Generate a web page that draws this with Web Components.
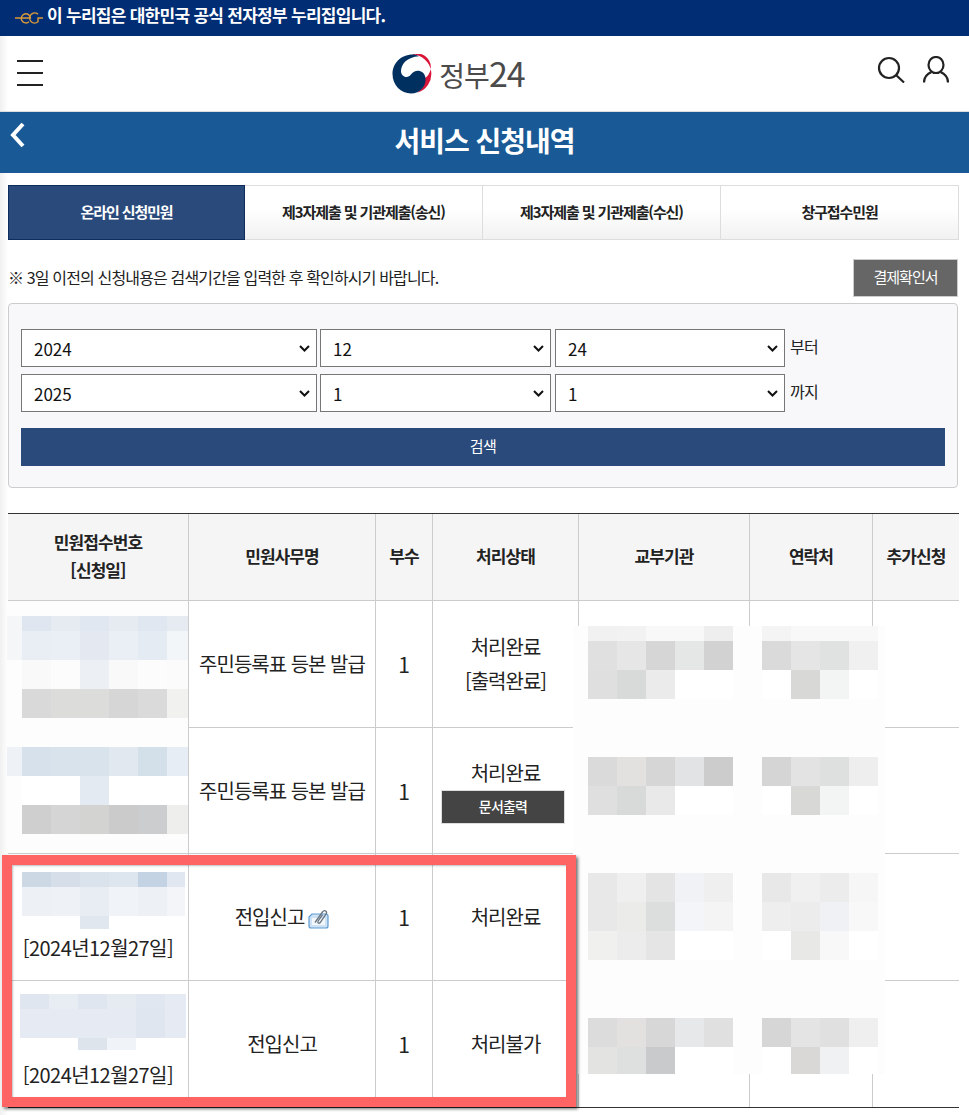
<!DOCTYPE html>
<html lang="ko">
<head>
<meta charset="utf-8">
<title>서비스 신청내역</title>
<style>
  html, body { margin: 0; padding: 0; }
  body {
    width: 969px;
    min-height: 1115px;
    overflow-x: hidden;
    background: linear-gradient(to right, #f0f0f0 0, #fbfbfb 6px, #fff 8px);
    font-family: "Noto Sans CJK KR", "Noto Sans", sans-serif;
    color: #222;
  }
</style>
</head>
<body>
  <gov-banner>이 누리집은 대한민국 공식 전자정부 누리집입니다.</gov-banner>
  <site-header></site-header>
  <title-bar>서비스 신청내역</title-bar>
  <page-body>
    <tab-bar>
      <tab-item active>온라인 신청민원</tab-item>
      <tab-item>제3자제출 및 기관제출(송신)</tab-item>
      <tab-item>제3자제출 및 기관제출(수신)</tab-item>
      <tab-item>창구접수민원</tab-item>
    </tab-bar>
    <notice-row button="결제확인서">※ 3일 이전의 신청내용은 검색기간을 입력한 후 확인하시기 바랍니다.</notice-row>
    <search-form></search-form>
    <result-table></result-table>
  </page-body>

<script>
class GovBanner extends HTMLElement {
  constructor() {
    super();
    this.attachShadow({ mode: "open" });
    this.shadowRoot.innerHTML = `
      <style>
        :host {
          display: flex;
          align-items: center;
          gap: 4px;
          height: 36px;
          padding-left: 15px;
          background: #002d73;
          color: #fff;
          font-size: 17px;
          font-weight: 700;
          letter-spacing: -0.72px;
        }
        svg { flex: none; margin-top: -1px; }
        span { margin-top: -7px; }
      </style>
      <svg width="28" height="12" viewBox="0 0 28 12" fill="none" stroke="#d99a3a" stroke-width="1.400">
        <path d="M0 6h15.500A4.600 4.600 0 1 0 14 9.800"/>
        <path d="M23 2.300A5 5 0 1 0 23 9.700V6h5"/>
      </svg>
      <span><slot></slot></span>
    `;
  }
}

class SiteHeader extends HTMLElement {
  constructor() {
    super();
    this.attachShadow({ mode: "open" });
    this.shadowRoot.innerHTML = `
      <style>
        :host {
          display: flex;
          align-items: center;
          justify-content: space-between;
          box-sizing: border-box;
          height: 76px;
          padding: 0 20px 0 17px;
          border-bottom: 1px solid #ddd;
        }
        .menu { display: flex; flex-direction: column; gap: 9.500px; width: 26px; margin-top: -1px; }
        .menu i { display: block; height: 2.500px; background: #222; }
        .logo { display: flex; align-items: center; gap: 7px; margin-left: -3px; margin-top: 1px; }
        .logo span {
          font-size: 28px;
          line-height: 38px;
          color: #4b4b4b;
          letter-spacing: -1px;
          font-weight: 400;
        }
        .logo b { font-size: 34px; font-weight: 400; letter-spacing: -1px; }
        .tools { display: flex; gap: 18px; margin-top: -8px; }
      </style>
      <div class="menu"><i></i><i></i><i></i></div>
      <div class="logo">
        <svg width="40" height="40" viewBox="0 0 40 40">
          <circle cx="20" cy="20" r="19.500" fill="#fff"/>
          <path d="M20 .5a19.500 19.500 0 0 1 5 38.300a17 17 0 0 0 8-14.800a13.500 13.500 0 0 0-13-23.500z" fill="#d9163a"/>
          <path d="M21 .5C8 .5 .5 10 .5 20c0 11 8.500 19.500 18.500 19.500c9 0 15.500-7.500 14.500-15.500c-.8-6-6.500-8.500-11-6.500c-3.500 1.600-4 5.500-8 5.500c-3 0-5.500-2.500-5.500-6C9 10 15 3 27 2.200C25 1 23 .5 21 .5z" fill="#00305f"/>
        </svg>
        <span>정부<b>24</b></span>
      </div>
      <div class="tools">
        <svg width="28" height="27" viewBox="0 0 28 27" fill="none" stroke="#222" stroke-width="2.200">
          <circle cx="12" cy="12" r="10"/><path d="M19 19l8 7.500"/>
        </svg>
        <svg width="26" height="27" viewBox="0 0 26 27" fill="none" stroke="#222" stroke-width="2.200">
          <ellipse cx="13" cy="9" rx="7.500" ry="8"/><path d="M1 26.500c0-5 3-8.500 7.500-10.500M25 26.500c0-5-3-8.500-7.500-10.500"/>
        </svg>
      </div>
    `;
  }
}

class TitleBar extends HTMLElement {
  constructor() {
    super();
    this.attachShadow({ mode: "open" });
    this.shadowRoot.innerHTML = `
      <style>
        :host {
          display: block;
          position: relative;
          height: 61px;
          line-height: 56px;
          background: #195a96;
          color: #fff;
          font-size: 28px;
          font-weight: 700;
          letter-spacing: -1px;
          text-align: center;
        }
        svg { position: absolute; left: 8px; top: 10px; }
      </style>
      <svg width="18" height="26" viewBox="0 0 18 26" fill="none" stroke="#fff" stroke-width="4">
        <path d="M15 2L5 13l10 11"/>
      </svg>
      <slot></slot>
    `;
  }
}

class PageBody extends HTMLElement {
  constructor() {
    super();
    this.attachShadow({ mode: "open" });
    this.shadowRoot.innerHTML = `
      <style>
        :host { display: block; width: 951px; margin-left: 8px; padding-top: 12px; }
      </style>
      <slot></slot>
    `;
  }
}

class TabBar extends HTMLElement {
  constructor() {
    super();
    this.attachShadow({ mode: "open" });
    this.shadowRoot.innerHTML = `
      <style>
        :host { display: grid; grid-template-columns: 237px 238px 238px 238px; height: 55px; }
      </style>
      <slot></slot>
    `;
  }
}

class TabItem extends HTMLElement {
  constructor() {
    super();
    this.attachShadow({ mode: "open" });
    this.shadowRoot.innerHTML = `
      <style>
        :host {
          display: flex;
          align-items: center;
          justify-content: center;
          box-sizing: border-box;
          padding-bottom: 3px;
          border: 1px solid #ddd;
          border-left-width: 0;
          background: linear-gradient(#fff 45%, #f1f1f1);
          color: #222;
          font-size: 15px;
          font-weight: 700;
          letter-spacing: -1.1px;
        }
        :host([active]) { background: #2a4a7c; border: 1px solid #0f2d5c; color: #fff; }
      </style>
      <slot></slot>
    `;
  }
}

class NoticeRow extends HTMLElement {
  constructor() {
    super();
    this.attachShadow({ mode: "open" });
    this.shadowRoot.innerHTML = `
      <style>
        :host {
          display: flex;
          align-items: center;
          justify-content: space-between;
          margin: 19px 1px 6px 0;
          height: 38px;
          font-size: 16px;
          letter-spacing: -0.85px;
          color: #222;
        }
        span { margin-top: -2px; }
        button {
          box-sizing: border-box;
          width: 105px;
          height: 38px;
          border: 1px solid #ccc;
          background: #666;
          color: #fff;
          font: inherit;
          font-size: 15px;
          letter-spacing: -1px;
          padding: 0 0 3px;
        }
      </style>
      <span><slot></slot></span>
      <button>${this.getAttribute("button")}</button>
    `;
  }
}

class SearchForm extends HTMLElement {
  constructor() {
    super();
    this.attachShadow({ mode: "open" });
    const sel = (w, v) => `<select style="width:${w}px"><option>${v}</option></select>`;
    const arrow = encodeURIComponent(`<svg xmlns="http://www.w3.org/2000/svg" width="11" height="7" viewBox="0 0 11 7"><path d="M1 1l4.500 4.500L10 1" fill="none" stroke="#111" stroke-width="2"/></svg>`);
    this.shadowRoot.innerHTML = `
      <style>
        :host {
          display: block;
          box-sizing: border-box;
          width: 950px;
          height: 185px;
          padding: 25px 12px 0;
          border: 1px solid #ccc;
          border-radius: 4px;
          background: #f8f8fa;
          color: #222;
        }
        .row { display: flex; gap: 3px; margin-bottom: 7px; }
        select {
          appearance: none;
          box-sizing: border-box;
          height: 38px;
          padding: 0 12px;
          border: 1px solid #777;
          border-radius: 0;
          background: #fff url("data:image/svg+xml,${arrow}") no-repeat right 6px center;
          color: #111;
          font-family: "Noto Sans CJK KR", "Noto Sans", sans-serif;
          font-size: 17px;
        }
        select:nth-child(3) { margin-left: 1px; }
        label { margin-left: 2px; font-size: 16px; line-height: 34px; letter-spacing: -0.6px; }
        button {
          display: block;
          width: 924px;
          height: 38px;
          margin-top: 16px;
          padding: 0 0 4px;
          border: 0;
          background: #2a4a7c;
          color: #fff;
          font-family: inherit;
          font-size: 15px;
          letter-spacing: -0.5px;
        }
      </style>
      <div class="row">${sel(296, "2024")}${sel(231, "12")}${sel(230, "24")}<label>부터</label></div>
      <div class="row">${sel(296, "2025")}${sel(231, "1")}${sel(230, "1")}<label>까지</label></div>
      <button>검색</button>
    `;
  }
}

// 가려진 영역: 위치와 칸 크기, 색을 속성으로 받는다
class MosaicBlock extends HTMLElement {
  constructor() {
    super();
    this.attachShadow({ mode: "open" });
    const colors = this.getAttribute("colors").trim().split(/\s+/);
    const cols = this.getAttribute("cols");
    const rows = this.getAttribute("rows");
    const cells = colors.map(c => `<i style="background:#${c}"></i>`).join("");
    this.shadowRoot.innerHTML = `
      <style>
        :host {
          display: grid;
          position: absolute;
          grid-template-columns: ${cols.split(" ").map(n => n + "px").join(" ")};
          grid-template-rows: ${rows.split(" ").map(n => n + "px").join(" ")};
        }
      </style>
      ${cells}
    `;
  }
}

class ResultTable extends HTMLElement {
  constructor() {
    super();
    this.attachShadow({ mode: "open" });
    const clip = `<svg class="clip" width="21" height="21" viewBox="0 0 21 21">
      <path d="M1 9l3-3h14q2 0 2 2v10q0 2-2 2H3q-2 0-2-2z" fill="#cfe2f5" stroke="#5f9bd0" stroke-width="1.200"/>
      <path d="M4 10h13v7H4z" fill="#f2f7fc"/>
      <path d="M7 14.500L14.500 4q1.500-2 3.200-1q1.600 1.200.3 3.200l-5.800 8.300q-1 1.200-2 .5q-.9-.7 0-2l4.300-6.200" fill="none" stroke="#69747f" stroke-width="1.300"/>
    </svg>`;
    this.shadowRoot.innerHTML = `
      <style>
        :host {
          display: block;
          position: absolute;
          left: 8px;
          top: 513px;
          width: 951px;
          font-size: 20px;
          color: #222;
        }
        table {
          width: 951px;
          table-layout: fixed;
          border-collapse: separate;
          border-spacing: 0;
          border-top: 1px solid #333;
          border-bottom: 1px solid #333;
        }
        th, td {
          padding: 0;
          box-sizing: border-box;
          border-left: 1px solid #ccc;
          border-bottom: 1px solid #ccc;
          text-align: center;
          letter-spacing: -1px;
        }
        tr > :first-child { border-left: 0; }
        tr:last-child > td { border-bottom: 0; }
        th {
          height: 87px;
          padding-bottom: 2px;
          background: #f5f5f5;
          font-size: 17px;
          font-weight: 700;
          line-height: 28px;
          letter-spacing: -0.9px;
        }
        td { line-height: 34px; }
        td.date { vertical-align: bottom; padding-bottom: 15px; letter-spacing: -0.55px; }
        td.up { padding-bottom: 2px; }
        .num { font-size: 21px; letter-spacing: 0; }
        .clip { vertical-align: -4px; margin-left: 4px; }
        .print {
          display: block;
          box-sizing: border-box;
          width: 124px;
          height: 34px;
          margin: 0 0 0 8px;
          padding: 0 0 2px;
          border: 1px solid #ddd;
          background: #444;
          color: #fff;
          font-family: inherit;
          font-size: 14px;
          font-weight: 500;
          letter-spacing: -0.8px;
        }
        .highlight {
          position: absolute;
          left: -6px;
          top: 342px;
          box-sizing: border-box;
          width: 574px;
          height: 252px;
          border: 10px solid #ff6464;
          box-shadow: 2px 2px 3px rgba(0, 0, 0, 0.55), inset 1px 1px 2px rgba(0, 0, 0, 0.25);
        }
      </style>
      <table>
        <colgroup>
          <col style="width:180px"><col style="width:187px"><col style="width:57px">
          <col style="width:146px"><col style="width:171px"><col style="width:123px"><col style="width:87px">
        </colgroup>
        <tr>
          <th>민원접수번호<br>[신청일]</th>
          <th>민원사무명</th><th>부수</th><th>처리상태</th><th>교부기관</th><th>연락처</th><th>추가신청</th>
        </tr>
        <tr style="height:127px">
          <td></td><td>주민등록표 등본 발급</td><td class="num">1</td><td>처리완료<br>[출력완료]</td><td></td><td></td><td></td>
        </tr>
        <tr style="height:126px">
          <td></td><td>주민등록표 등본 발급</td><td class="num">1</td>
          <td class="up">처리완료<button class="print">문서출력</button></td><td></td><td></td><td></td>
        </tr>
        <tr style="height:127px">
          <td class="date">[2024년12월27일]</td><td>전입신고${clip}</td><td class="num">1</td><td>처리완료</td><td></td><td></td><td></td>
        </tr>
        <tr style="height:126px">
          <td class="date">[2024년12월27일]</td><td>전입신고</td><td class="num">1</td><td>처리불가</td><td></td><td></td><td></td>
        </tr>
      </table>

      <mosaic-block style="left:-1px;top:88px" cols="181" rows="252" colors="fdfdfd"></mosaic-block>
      <mosaic-block style="left:-1px;top:103px" cols="15 29 29 29 29 29 21" rows="15 29 29 29" colors="
        f5f6f8 dfe6ef e6ebf2 e0e7f0 e6ebf2 e1e7f0 e6ebf2
        f5f6f8 e9eef5 eaeff5 e4e9f1 eaeff5 e5ebf2 f3f6f9
        fdfdfd f9f9f9 fcfcfc eceff4 f9f9f9 fcfcfc fbfbfb
        fdfdfd d9d9d9 dcdcdb dcdcda d6d6d6 dadada f1f1ef"></mosaic-block>
      <mosaic-block style="left:-1px;top:234px" cols="15 29 29 29 29 29 21" rows="29 29 29" colors="
        eef2f6 d7e1eb d9e3ec d9e3ec e1e8f0 d3dfe9 e7edf4
        fdfdfd fff fff e4eaf2 fff fff fff
        fdfdfd cfcfcf d5d5d5 d3d3d1 cbcbcb cccdcf eeeeec"></mosaic-block>
      <mosaic-block style="left:14px;top:359px" cols="29 29 29 29 29 18" rows="15 29 13" colors="
        ccd8e4 d6dfe9 dae3ec dde5ee c3d3e3 e0e7f0
        edf1f6 eef1f6 e8edf3 f0f3f7 edf1f6 f3f5f9
        fff fff e0e7ef fff fff fff"></mosaic-block>
      <mosaic-block style="left:12px;top:481px" cols="29 29 29 29 29 21" rows="15 29 12" colors="
        dfe6ef e8edf3 dfe6ef e6ebf2 e1e7f0 e6ebf3
        e6ebf3 e6ebf3 e6ebf3 e6ebf3 dfe6ef e6ebf3
        fff fff dde4ec f0f3f8 fff fff"></mosaic-block>

      <mosaic-block style="left:565px;top:113px" cols="312" rows="448" colors="fdfdfd"></mosaic-block>
      <mosaic-block style="left:580px;top:113px" cols="29 29 29 29 29 29 29 29 29 29" rows="15 29 29" colors="
        f1f1f1 f2f2f2 f8f8f8 f8f8f8 eeeeee fdfdfd f4f4f4 f8f8f8 f8f8f8 f8f8f8
        e0e0e0 e6e6e6 d6d6d6 e5e7e6 d2d2d2 fdfdfd dadada e5e5e5 e0e2e1 f0f0f0
        dfdfdf d8dad9 ebebeb fff fff fdfdfd fff d8d8d6 f3f5f4 fff"></mosaic-block>
      <mosaic-block style="left:580px;top:244px" cols="29 29 29 29 29 29 29 29 29 29" rows="29 29" colors="
        dadada e2e1df d6d6d6 e2e3e5 cccccc fdfdfd d5d5d5 e3e3e3 dde0df eeeeee
        dfdfdf d8dad9 e9e9e9 fff fff fdfdfd fff d8d8d6 f3f5f4 fff"></mosaic-block>
      <mosaic-block style="left:580px;top:360px" cols="29 29 29 29 29 29 29 29 29 29" rows="29 29 29" colors="
        e8e8e8 efefef e4e4e4 f1f2f5 efefef fdfdfd e8e8e8 f0f0f0 ececec f6f6f6
        e8e8e8 ebebe9 dcdedd f4f5f8 f4f4f4 fdfdfd eeeeee ececec f0f1f4 f8f8f8
        f0f0ee ececec e5e5e5 fff fff fdfdfd fff e8e8e6 f7f8f7 fff"></mosaic-block>
      <mosaic-block style="left:580px;top:505px" cols="29 29 29 29 29 29 29 29 29 29" rows="29 27" colors="
        dcdcdc e2e1df d7d7d7 e7e8ea e0e0e0 fdfdfd d6d6d6 e4e4e4 e0e0e0 efefef
        e3e3e1 dedfdf c9cacc fff fff fdfdfd fff d9d8d6 f0f1f3 fff"></mosaic-block>

      <div class="highlight"></div>
    `;
  }
}

// 안쪽 요소부터 등록
customElements.define("mosaic-block", MosaicBlock);
customElements.define("gov-banner", GovBanner);
customElements.define("site-header", SiteHeader);
customElements.define("title-bar", TitleBar);
customElements.define("page-body", PageBody);
customElements.define("tab-bar", TabBar);
customElements.define("tab-item", TabItem);
customElements.define("notice-row", NoticeRow);
customElements.define("search-form", SearchForm);
customElements.define("result-table", ResultTable);
</script>
</body>
</html>
